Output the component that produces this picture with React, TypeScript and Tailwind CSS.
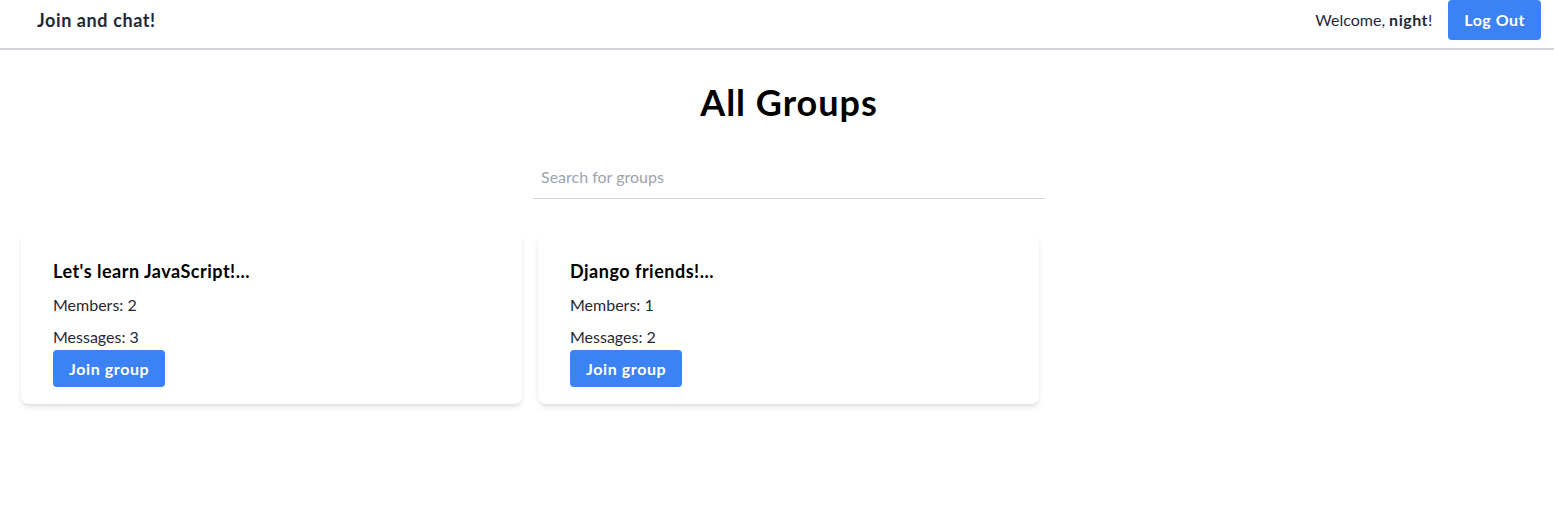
import React from "react";

const groups = [
  { name: "Let's learn JavaScript!...", members: 2, messages: 3 },
  { name: "Django friends!...", members: 1, messages: 2 },
];

export default function App() {
  return (
    <div className="min-h-screen bg-white" style={{ fontFamily: "Lato, 'Noto Sans', sans-serif" }}>
      <header className="flex items-start justify-between border-b-2 border-[#d1d5db] pb-2 pl-[37px] pr-[13px]">
        <div className="flex h-10 items-center text-lg font-bold tracking-[0.6px] text-[#1f2937]">Join and chat!</div>
        <div className="flex items-center gap-4">
          <span className="text-base text-[#1f2937]">
            Welcome, <span className="font-bold tracking-[0.5px]">night</span>!
          </span>
          <button className="rounded bg-[#3b82f6] px-4 py-2 text-base font-bold tracking-[0.5px] text-white">Log Out</button>
        </div>
      </header>
      <main className="flex flex-col items-center pl-6">
        <h1 className="mt-8 text-4xl font-bold tracking-[1px] text-black">All Groups</h1>
        <div className="mt-8 w-[512px] border-b border-[#d1d5db]">
          <input
            className="h-11 w-full px-2 text-base text-[#1f2937] outline-none placeholder:text-[#9ca3af]"
            placeholder="Search for groups"
          />
        </div>
      </main>
      <div className="mt-[33px] flex gap-4 px-[21px]">
        {groups.map((g) => (
          <div key={g.name} className="w-[501px] rounded-lg bg-white px-8 pb-[17px] pt-[25px] shadow-md">
            <h2 className="text-lg font-bold leading-7 tracking-[0.5px] text-black">{g.name}</h2>
            <p className="mt-2 text-base text-[#1f2937]">Members: {g.members}</p>
            <p className="mt-2 text-base text-[#1f2937]">Messages: {g.messages}</p>
            <button className="mt-px rounded bg-[#3b82f6] px-4 py-[6.5px] text-base font-bold tracking-[0.6px] text-white">
              Join group
            </button>
          </div>
        ))}
      </div>
    </div>
  );
}
